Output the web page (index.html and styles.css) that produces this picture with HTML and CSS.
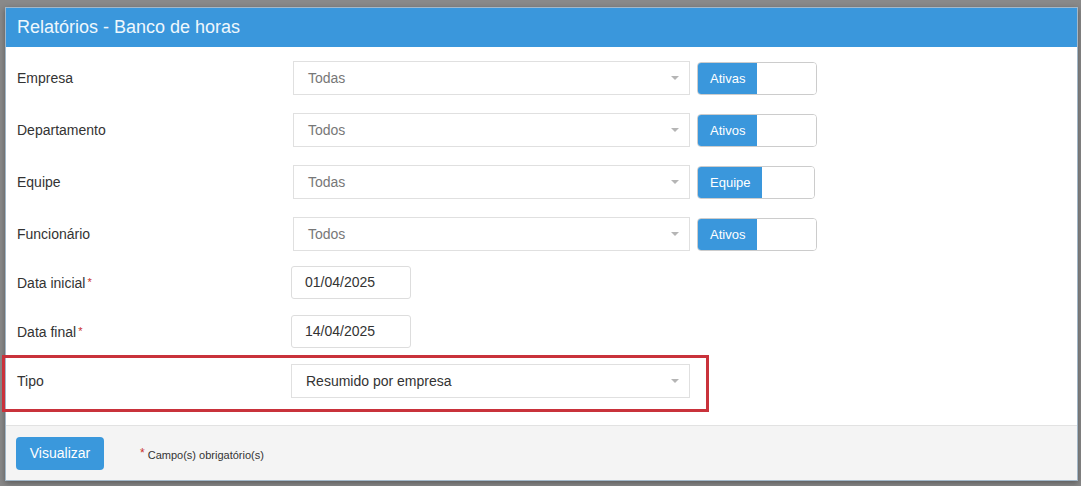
FILE: index.html
```html
<!DOCTYPE html>
<html>
  <head>
    <title>Relatórios - Banco de horas</title>
    <link rel="stylesheet" href="styles.css">
  </head>
  <body>
    <div class="modal">
      <div class="modal-header">Relatórios - Banco de horas</div>
      <div class="modal-body">
        <div class="row">
          <label class="lbl">Empresa</label>
          <div class="select"><span class="placeholder">Todas</span><span class="caret"></span></div>
          <div class="switch"><span class="on">Ativas</span><span class="off"></span></div>
        </div>
        <div class="row">
          <label class="lbl">Departamento</label>
          <div class="select"><span class="placeholder">Todos</span><span class="caret"></span></div>
          <div class="switch"><span class="on">Ativos</span><span class="off"></span></div>
        </div>
        <div class="row">
          <label class="lbl">Equipe</label>
          <div class="select"><span class="placeholder">Todas</span><span class="caret"></span></div>
          <div class="switch switch-sm"><span class="on">Equipe</span><span class="off"></span></div>
        </div>
        <div class="row row-last">
          <label class="lbl">Funcionário</label>
          <div class="select"><span class="placeholder">Todos</span><span class="caret"></span></div>
          <div class="switch"><span class="on">Ativos</span><span class="off"></span></div>
        </div>
        <div class="row row-date">
          <label class="lbl">Data inicial<span class="req">*</span></label>
          <div class="input">01/04/2025</div>
        </div>
        <div class="row row-date">
          <label class="lbl">Data final<span class="req">*</span></label>
          <div class="input">14/04/2025</div>
        </div>
        <div class="row row-tipo">
          <label class="lbl">Tipo</label>
          <div class="select select-wide"><span class="value">Resumido por empresa</span><span class="caret"></span></div>
        </div>
      </div>
      <div class="modal-footer">
        <button class="btn">Visualizar</button>
        <span class="note"><span class="req">*</span> Campo(s) obrigatório(s)</span>
      </div>
    </div>
  </body>
</html>
```

FILE: styles.css
```css
html, body {
  margin:0;
  height:100%;
}
body {
  background-color:#898989;
  font-family:"Liberation Sans", Arial, sans-serif;
  color:#333;
  padding:7px 5px 0 5px;
  box-sizing:border-box;
}
.modal {
  width:1071px;
  background-color:#fff;
  border:1px solid #a3b8c9;
  box-shadow:0 2px 6px rgba(0,0,0,0.35);
}
.modal-header {
  background-color:#3a97dc;
  color:#eef7fd;
  font-size:18px;
  height:39px;
  line-height:39px;
  padding-left:11px;
}
.modal-body {
  padding:14px 0 13px 0;
}
.row {
  display:flex;
  align-items:center;
  padding-left:11px;
  margin-bottom:18px;
}
.row-last {
  margin-bottom:15px;
}
.lbl {
  width:276px;
  font-size:14px;
  color:#333;
}
.req {
  color:#c9302c;
  font-size:11px;
  margin-left:2px;
  vertical-align:2px;
}
.select {
  width:397px;
  height:34px;
  box-sizing:border-box;
  border:1px solid #e0e0e0;
  display:flex;
  align-items:center;
  padding-left:14px;
  padding-right:10px;
  font-size:14px;
}
.placeholder {
  color:#777;
  flex:1;
}
.value {
  color:#333;
  flex:1;
}
.caret {
  width:0;
  height:0;
  border-left:4px solid transparent;
  border-right:4px solid transparent;
  border-top:4px solid #b5b5b5;
}
.switch {
  display:flex;
  width:120px;
  height:33px;
  box-sizing:border-box;
  margin-left:7px;
  border:1px solid #ccc;
  border-radius:4px;
  overflow:hidden;
}
.switch-sm {
  width:118px;
}
.switch .on {
  background-color:#3a97dc;
  color:#fff;
  font-size:13px;
  padding:0 12px;
  line-height:31px;
}
.switch .off {
  flex:1;
  background-color:#fff;
}
.row-date {
  margin-bottom:16px;
}
.row-date .lbl {
  width:274px;
}
.input {
  width:120px;
  height:33px;
  box-sizing:border-box;
  border:1px solid #ddd;
  border-radius:3px;
  padding-left:13px;
  line-height:31px;
  font-size:14px;
  color:#333;
}
.row-tipo {
  width:689px;
  margin:-9px 0 0 -4px;
  padding:6px 0 11px 12px;
  border:3px solid #c9323b;
}
.row-tipo .lbl {
  width:274px;
}
.select-wide {
  width:399px;
}
.modal-footer {
  background-color:#f4f4f4;
  border-top:1px solid #e2e2e2;
  height:54px;
  display:flex;
  align-items:center;
  padding-left:10px;
}
.btn {
  background-color:#3a98dc;
  color:#fff;
  border:none;
  border-radius:4px;
  width:88px;
  height:33px;
  font-family:"Liberation Sans", Arial, sans-serif;
  font-size:14px;
  padding:0;
}
.note {
  font-size:11px;
  color:#333;
  margin-left:36px;
}
.note .req {
  font-size:12px;
  margin:0;
}
```
